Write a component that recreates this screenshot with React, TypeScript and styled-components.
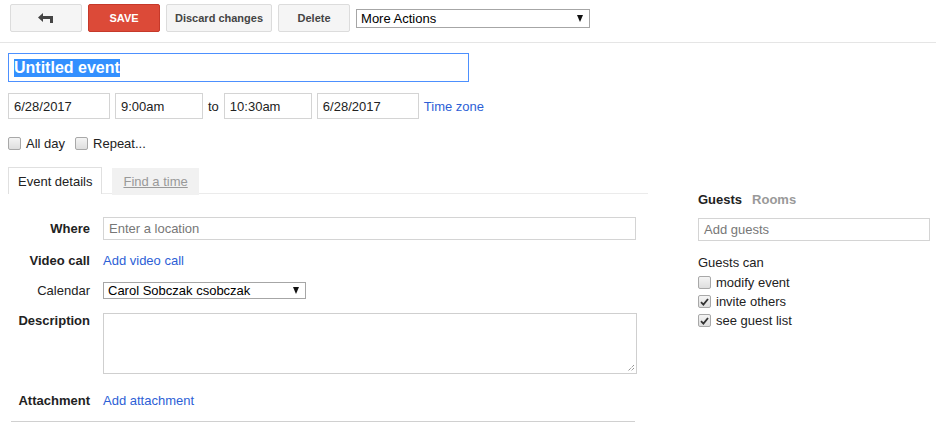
import React from "react";
import styled, { createGlobalStyle } from "styled-components";

const GlobalStyle = createGlobalStyle`
  html, body {
    margin: 0;
    padding: 0;
    background: #fff;
  }
  body {
    font-family: "Liberation Sans", Arial, sans-serif;
    font-size: 13px;
    color: #222;
  }
  * { box-sizing: border-box; }
`;

const Toolbar = styled.div`
  display: flex;
  align-items: center;
  gap: 6px;
  padding: 4px 0 10px 10px;
  border-bottom: 1px solid #e5e5e5;
`;

const Button = styled.button<{ $primary?: boolean; $w?: number }>`
  height: 28px;
  min-width: ${(p) => p.$w ?? 72}px;
  padding: 0 8px;
  border-radius: 2px;
  border: 1px solid ${(p) => (p.$primary ? "#c6392a" : "#dcdcdc")};
  background: ${(p) => (p.$primary ? "#dc4a38" : "#f5f5f5")};
  color: ${(p) => (p.$primary ? "#fff" : "#444")};
  font-family: "Liberation Sans", Arial, sans-serif;
  font-size: 11px;
  font-weight: bold;
  display: flex;
  align-items: center;
  justify-content: center;
`;

const FakeSelect = styled.div<{ $w: number; $h: number }>`
  width: ${(p) => p.$w}px;
  height: ${(p) => p.$h}px;
  border: 1px solid #a6a6a6;
  padding: 0 6px 0 4px;
  display: flex;
  align-items: center;
  justify-content: space-between;
  font-size: 13px;
  color: #000;
  background: #fff;
`;

const Arrow = styled.span`
  width: 0;
  height: 0;
  border-left: 3.5px solid transparent;
  border-right: 3.5px solid transparent;
  border-top: 7px solid #111;
`;

const Main = styled.div`
  padding: 0 0 0 8px;
`;

const TitleBox = styled.div`
  margin-top: 10px;
  width: 461px;
  height: 29px;
  border: 1px solid #4d90fe;
  padding-left: 5px;
  display: flex;
  align-items: center;
  font-size: 16px;
  font-weight: bold;
`;

const Selected = styled.span`
  background: #3390ff;
  color: #fff;
  line-height: 18px;
`;

const DateRow = styled.div`
  margin-top: 11px;
  display: flex;
  align-items: center;
  gap: 5px;
`;

const Field = styled.div<{ $w: number; $h?: number; $muted?: boolean }>`
  width: ${(p) => p.$w}px;
  height: ${(p) => p.$h ?? 26}px;
  border: 1px solid #d4d4d4;
  padding: 0 5px;
  display: flex;
  align-items: center;
  font-size: 13px;
  color: ${(p) => (p.$muted ? "#777" : "#222")};
  background: #fff;
`;

const GuestInput = styled(Field)`
  margin-top: 11px;
`;

const Link = styled.a`
  color: #2d5fd6;
  text-decoration: none;
  font-size: 13px;
`;

const CheckRow = styled.div`
  margin-top: 17px;
  height: 15px;
  display: flex;
  align-items: center;
  gap: 10px;
`;

const CheckItem = styled.label<{ $h?: number }>`
  display: flex;
  align-items: center;
  gap: 5px;
  height: ${(p) => p.$h ?? 15}px;
`;

const Box = styled.span`
  width: 13px;
  height: 13px;
  border: 1px solid #a8a8a8;
  border-radius: 2px;
  background: linear-gradient(#f4f4f4, #dedede);
  display: flex;
  align-items: center;
  justify-content: center;
`;

const Body = styled.div`
  margin-top: 16px;
  display: flex;
  align-items: flex-start;
`;

const Left = styled.div`
  width: 640px;
  flex-shrink: 0;
`;

const Tabs = styled.div`
  display: flex;
  gap: 10px;
  border-bottom: 1px solid #ebebeb;
  height: 27px;
`;

const Tab = styled.div<{ $active?: boolean }>`
  height: 27px;
  display: flex;
  align-items: center;
  padding: 0 ${(p) => (p.$active ? 9 : 11)}px;
  font-size: 13px;
  background: ${(p) => (p.$active ? "#fff" : "#f1f1f1")};
  color: ${(p) => (p.$active ? "#222" : "#999")};
  text-decoration: ${(p) => (p.$active ? "none" : "underline")};
  border: ${(p) => (p.$active ? "1px solid #e0e0e0" : "none")};
  border-bottom: none;
  margin-top: ${(p) => (p.$active ? 0 : 1)}px;
`;

const Row = styled.div<{ $top: number; $align?: string }>`
  margin-top: ${(p) => p.$top}px;
  display: grid;
  grid-template-columns: 82px 534px;
  column-gap: 13px;
  align-items: ${(p) => p.$align ?? "center"};
`;

const Label = styled.div<{ $regular?: boolean }>`
  text-align: right;
  font-weight: ${(p) => (p.$regular ? "normal" : "bold")};
  color: #222;
  line-height: 15px;
`;

const TextArea = styled.div`
  height: 61px;
  border: 1px solid #cfcfcf;
  position: relative;
`;

const Grip = styled.svg`
  position: absolute;
  right: 1px;
  bottom: 1px;
`;

const LineText = styled.div`
  height: 18px;
  display: flex;
  align-items: center;
`;

const Divider = styled.div`
  margin: 12px 0 0 3px;
  width: 624px;
  height: 1px;
  background: #d0d0d0;
`;

const Right = styled.div`
  margin-left: 50px;
  width: 232px;
  flex-shrink: 0;
  padding-top: 25px;
`;

const GuestHead = styled.div`
  display: flex;
  gap: 10px;
  font-weight: bold;
  line-height: 15px;
`;

const Muted = styled.span`
  color: #999;
`;

const SubHead = styled.div`
  margin-top: 14px;
  line-height: 15px;
`;

const Perms = styled.div`
  margin-top: 3px;
`;

function Checkbox({ checked }: { checked?: boolean }) {
  return (
    <Box>
      {checked && (
        <svg width="9" height="8" viewBox="0 0 9 8">
          <path d="M1 4.2 L3.4 6.6 L8 1" stroke="#333" strokeWidth="1.8" fill="none" />
        </svg>
      )}
    </Box>
  );
}

function BackIcon() {
  return (
    <svg width="16" height="10" viewBox="0 0 16 10">
      <path d="M0 4.5 L5 0 V3 H15 V10 H12 V6 H5 V9 Z" fill="#444" />
    </svg>
  );
}

export default function App() {
  return (
    <>
      <GlobalStyle />
      <Toolbar>
        <Button>
          <BackIcon />
        </Button>
        <Button $primary>SAVE</Button>
        <Button>Discard changes</Button>
        <Button>Delete</Button>
        <FakeSelect $w={234} $h={19}>
          More Actions
          <Arrow />
        </FakeSelect>
      </Toolbar>
      <Main>
        <TitleBox>
          <Selected>Untitled event</Selected>
        </TitleBox>
        <DateRow>
          <Field $w={102}>6/28/2017</Field>
          <Field $w={88}>9:00am</Field>
          <span>to</span>
          <Field $w={88}>10:30am</Field>
          <Field $w={102}>6/28/2017</Field>
          <Link href="#">Time zone</Link>
        </DateRow>
        <CheckRow>
          <CheckItem>
            <Checkbox />
            All day
          </CheckItem>
          <CheckItem>
            <Checkbox />
            Repeat...
          </CheckItem>
        </CheckRow>
        <Body>
          <Left>
            <Tabs>
              <Tab $active>Event details</Tab>
              <Tab>Find a time</Tab>
            </Tabs>
            <Row $top={23}>
              <Label>Where</Label>
              <Field $w={533} $h={23} $muted>
                Enter a location
              </Field>
            </Row>
            <Row $top={11}>
              <Label>Video call</Label>
              <LineText>
                <Link href="#">Add video call</Link>
              </LineText>
            </Row>
            <Row $top={13}>
              <Label $regular>Calendar</Label>
              <FakeSelect $w={203} $h={17}>
                Carol Sobczak csobczak
                <Arrow />
              </FakeSelect>
            </Row>
            <Row $top={14} $align="start">
              <Label>Description</Label>
              <TextArea>
                <Grip width="8" height="8" viewBox="0 0 8 8">
                  <path d="M7 1 L1 7 M7 4 L4 7" stroke="#666" strokeWidth="1" strokeDasharray="1 1" />
                </Grip>
              </TextArea>
            </Row>
            <Row $top={17}>
              <Label>Attachment</Label>
              <LineText>
                <Link href="#">Add attachment</Link>
              </LineText>
            </Row>
            <Divider />
          </Left>
          <Right>
            <GuestHead>
              <span>Guests</span>
              <Muted>Rooms</Muted>
            </GuestHead>
            <GuestInput $w={232} $h={23} $muted>
              Add guests
            </GuestInput>
            <SubHead>Guests can</SubHead>
            <Perms>
              <CheckItem $h={19}>
                <Checkbox />
                modify event
              </CheckItem>
              <CheckItem $h={19}>
                <Checkbox checked />
                invite others
              </CheckItem>
              <CheckItem $h={19}>
                <Checkbox checked />
                see guest list
              </CheckItem>
            </Perms>
          </Right>
        </Body>
      </Main>
    </>
  );
}
